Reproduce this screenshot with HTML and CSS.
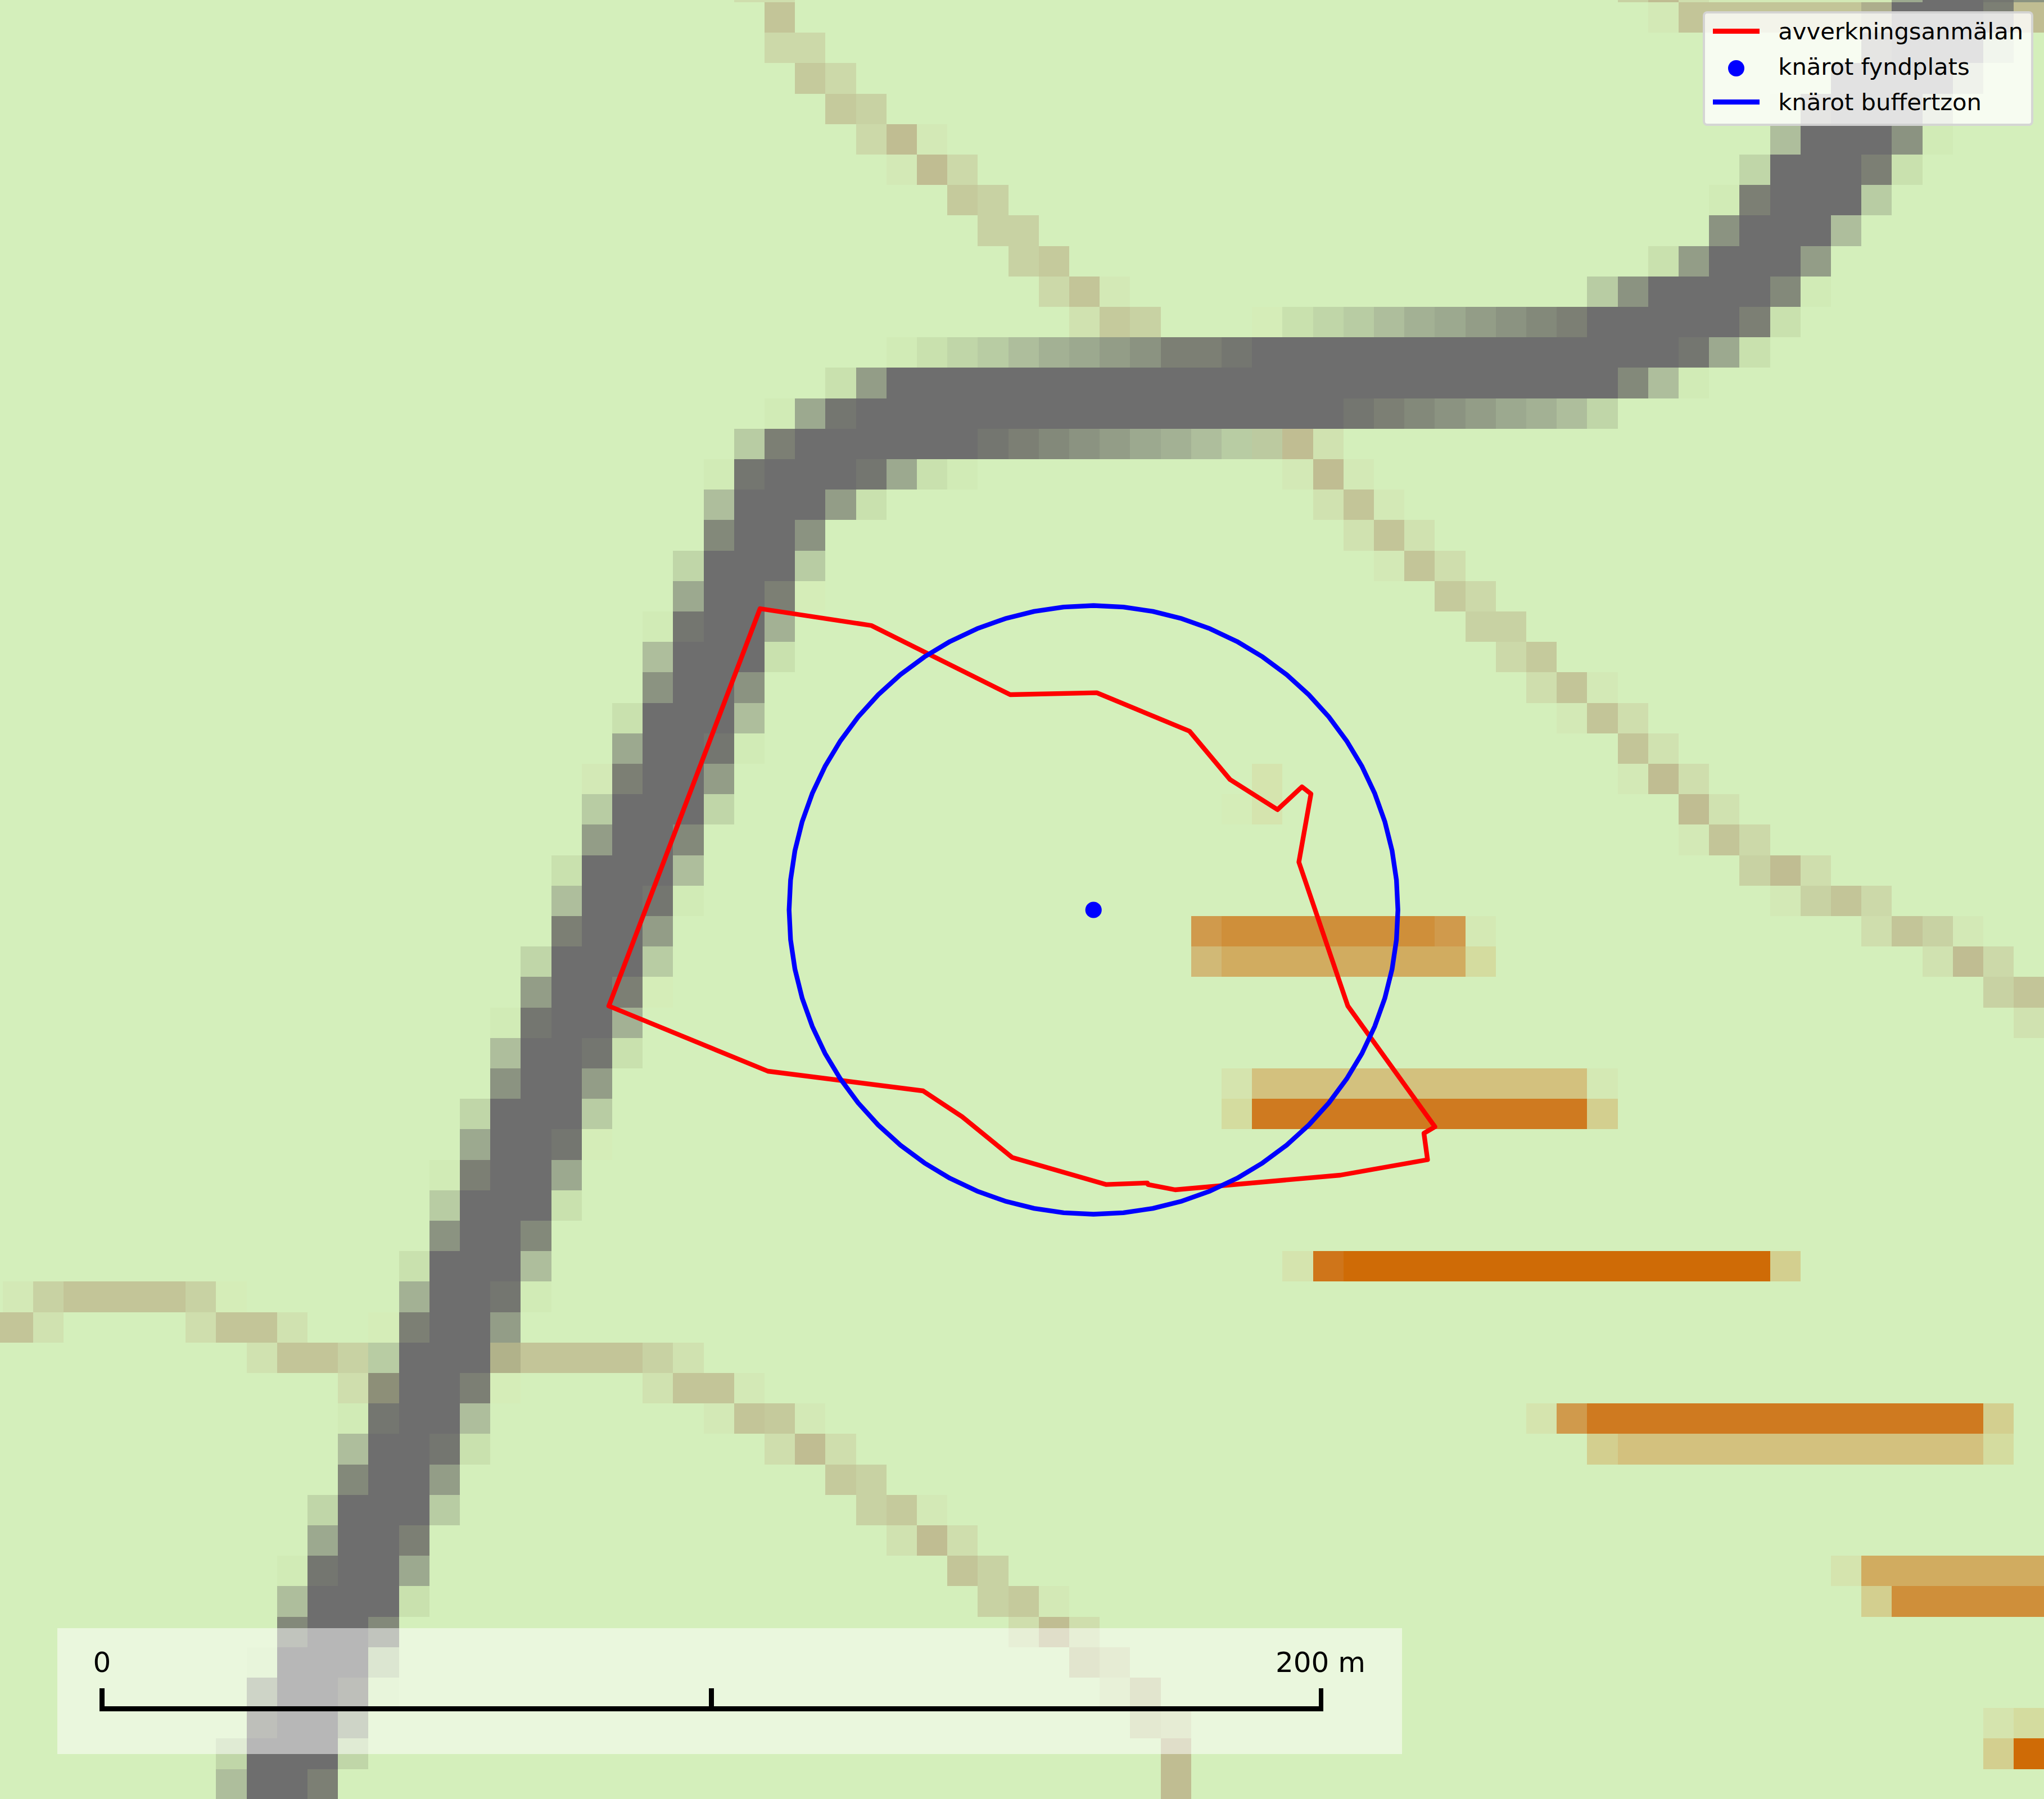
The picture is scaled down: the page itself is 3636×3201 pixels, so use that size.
FILE: index.html
```html
<!DOCTYPE html>
<html lang="sv">
<head>
<meta charset="utf-8">
<title>Knärot buffertzon</title>
<link rel="stylesheet" href="styles.css">
</head>
<body>
<main class="map">
  <svg class="map-canvas" width="3636" height="3201" viewBox="0 0 3636 3201" xmlns="http://www.w3.org/2000/svg">
    <g id="raster" class="raster"></g>
    <polygon class="notice" points="1352,1083 1550,1113 1797,1236 1951,1232.6 2116,1301 2188,1387 2272.4,1440.6 2316,1400 2332,1412.5 2310.5,1534 2397.5,1789.7 2552.6,2005 2533,2016.4 2539.4,2063.5 2384,2091 2090.5,2117 2042,2107.7 2041,2104.8 1968,2107.7 1800.5,2059.5 1711.5,1987 1642,1941 1366,1906 1083,1790"></polygon>
    <polygon id="buffer" class="buffer" points=""></polygon>
    <circle class="site" cx="1945.2" cy="1619" r="14.6"></circle>
  </svg>

  <aside class="legend">
    <div class="legend-row"><span class="key"><span class="key-line key-red"></span></span><span class="legend-label">avverkningsanmälan</span></div>
    <div class="legend-row"><span class="key"><span class="key-dot"></span></span><span class="legend-label">knärot fyndplats</span></div>
    <div class="legend-row"><span class="key"><span class="key-line key-blue"></span></span><span class="legend-label">knärot buffertzon</span></div>
  </aside>

  <div class="scale">
    <div class="scale-labels"><span class="scale-label scale-zero">0</span><span class="scale-label">200 m</span></div>
    <div class="scale-bar"><span class="tick"></span><span class="tick"></span><span class="tick"></span></div>
  </div>
</main>
<script src="script.js"></script>
</body>
</html>
```
FILE: styles.css
```css
html, body {
  margin: 0;
  padding: 0;
  background: #d4efbb;
}

.map {
  position: relative;
  width: 3636px;
  height: 3201px;
  overflow: hidden;
  background: #d4efbb;
  font-family: "DejaVu Sans", sans-serif;
  color: #000;
}

.map-canvas {
  position: absolute;
  left: 0;
  top: 0;
  display: block;
}

.raster {
  shape-rendering: crispEdges;
}

.notice {
  fill: none;
  stroke: #ff0000;
  stroke-width: 8.33;
  stroke-linejoin: round;
}

.buffer {
  fill: none;
  stroke: #0000ff;
  stroke-width: 8.33;
  stroke-linejoin: round;
}

.site {
  fill: #0000ff;
}

.legend {
  position: absolute;
  left: 3029px;
  top: 20px;
  width: 588px;
  height: 203.5px;
  box-sizing: border-box;
  display: flex;
  flex-direction: column;
  padding: 0 0 0 14px;
  background: rgba(255, 255, 255, 0.8);
  border: 4px solid rgba(204, 204, 204, 0.8);
  border-radius: 8px;
}

.legend-row {
  display: flex;
  align-items: center;
  gap: 33px;
  height: 63px;
  font-size: 41.67px;
  line-height: 63px;
  white-space: nowrap;
}

.key {
  display: flex;
  align-items: center;
  justify-content: center;
  width: 83.3px;
  height: 63px;
  flex: none;
}

.key-line {
  display: block;
  width: 83.3px;
  height: 8.33px;
}

.key-red { background: #ff0000; }
.key-blue { background: #0000ff; }

.key-dot {
  display: block;
  width: 29px;
  height: 29px;
  margin-top: 5px;
  border-radius: 50%;
  background: #0000ff;
}

.scale {
  position: absolute;
  left: 102px;
  top: 2897px;
  width: 2392px;
  height: 224px;
  box-sizing: border-box;
  padding: 32px 140px 0 75px;
  background: rgba(255, 255, 255, 0.5);
}

.scale-labels {
  display: flex;
  justify-content: space-between;
  height: 75px;
  font-size: 50px;
  line-height: 58px;
  margin-right: -75px;
}

.scale-zero {
  margin-left: -11.5px;
}

.scale-bar {
  display: flex;
  justify-content: space-between;
  align-items: flex-start;
  height: 41px;
  box-sizing: border-box;
  border-bottom: 9px solid #000;
}

.tick {
  display: block;
  width: 8.5px;
  height: 41px;
  background: #000;
  flex: none;
}
```
FILE: script.js
```js
// Raster land-cover cells: each row lists "<first col><letter><repeat>..." runs.
var PALETTE = {
  a:"#d1ebb6",b:"#c9e1ae",c:"#c0d6a8",d:"#b8cca3",e:"#aebe9c",f:"#a3b194",g:"#9ca98f",
  h:"#939d87",i:"#8b9381",j:"#83897a",k:"#7c7f74",l:"#747670",m:"#6e6e6e",
  n:"#d3e9b6",o:"#d0e2b0",p:"#cfdead",q:"#ccd9a9",r:"#c8d2a3",s:"#c5ca9c",t:"#c3c598",
  u:"#c0bd92",v:"#b1b28a",w:"#8d8f78",x:"#bccaa0",y:"#adae8c",
  A:"#cf6b06",B:"#cf751a",C:"#cf7a20",D:"#cf8f3a",E:"#d09a4c",F:"#d1ac60",G:"#d1b976",
  H:"#d3c17e",I:"#d3cf8f",J:"#d4dc9f",K:"#d5e4ae",L:"#d4e9b4",M:"#d5edb8"
};
var ROWS = [
  "25pp 54rup 57n6 63g 64m2 66l 67i",
  "26t 55n 56t6 62y 63m3 66k 67u",
  "26qq 62km3d",
  "27sq 61m4e",
  "28sr 59akm3e",
  "29qun 59em3ia",
  "30nuq 58cm3kb",
  "32sr 57akm3d",
  "33rr 57im3e",
  "34rs 55bhm3h",
  "35qtn 53dim4ja",
  "36osr 42Mbcdefghijkm5kb",
  "30abcdefghikklm14lgb",
  "28bhm24jea",
  "26aglm16lkjihgfec",
  "25dkm6lkjihgfedxuo",
  "24alm3lgba 43nun",
  "24em3hb 44otn",
  "24jm2i 45oto",
  "23cm3d 46ntp",
  "23gm2kM 48sq",
  "22alm2f 49rr",
  "22em3b 50qs",
  "22im2i 51ptn",
  "21bm3e 52ntp",
  "21gm2la 54to",
  "20nkm2h 42K 54nup",
  "20dm3c 41MK 56uo",
  "20hm2j 56ntq",
  "19bm3e 58rup",
  "19em2la 59nrtq",
  "19km2h 40ED7EL 62ptrn",
  "18cm3d 40GF8J 64ouq",
  "18hm2kM 66rt",
  "17alm2f 67o",
  "17em2lb",
  "17im2h 41KH11L",
  "16cm3d 41JC11I",
  "16gm2lM",
  "15akm2g",
  "15dm3b",
  "15im2j",
  "14bm3e 43KBA14I",
  "1nrt4rM 14fm2la",
  "0tto 7ptto 13Mkm2h",
  "9ot2rdm3vt4ro",
  "12pwm2kM 22ot2n",
  "12alm2e 24ntsn 51KEC13I",
  "12em2lb 26pup 53IH12J",
  "12jm2h 28sr",
  "11cm3d 29rsn",
  "11gm2k 30oup",
  "10alm2g 32tr 61KF6",
  "10em3b 33rsn 62ID5",
  "10jm2j 34pup",
  "9am3d 36sq",
  "9gm2ka 37os",
  "9km2g 38rq 66KJ",
  "8cm3c 39u 66IA",
  "8em2k 39u"
];

var STEP = 54.2, NS = "http://www.w3.org/2000/svg";
var raster = document.getElementById("raster");

ROWS.forEach(function (row, r) {
  var y0 = Math.round(4 + STEP * (r - 1)), y1 = Math.round(4 + STEP * r);
  row.split(" ").forEach(function (token) {
    var col = parseInt(token, 10);
    token.replace(/^\d+/, "").replace(/([a-zA-Z])(\d*)/g, function (_, letter, count) {
      var n = count ? parseInt(count, 10) : 1;
      var x0 = Math.round(5 + STEP * (col - 1)), x1 = Math.round(5 + STEP * (col + n - 1));
      var cell = document.createElementNS(NS, "rect");
      cell.setAttribute("x", x0);
      cell.setAttribute("y", y0);
      cell.setAttribute("width", x1 - x0);
      cell.setAttribute("height", y1 - y0);
      cell.setAttribute("fill", PALETTE[letter]);
      raster.appendChild(cell);
      col += n;
    });
  });
});

// 64-sided buffer ring round the find site.
var pts = [];
for (var i = 0; i < 64; i++) {
  var a = i * Math.PI / 32;
  pts.push((1945.2 + 541.5 * Math.cos(a)).toFixed(1) + "," + (1619 + 541.5 * Math.sin(a)).toFixed(1));
}
document.getElementById("buffer").setAttribute("points", pts.join(" "));
```
